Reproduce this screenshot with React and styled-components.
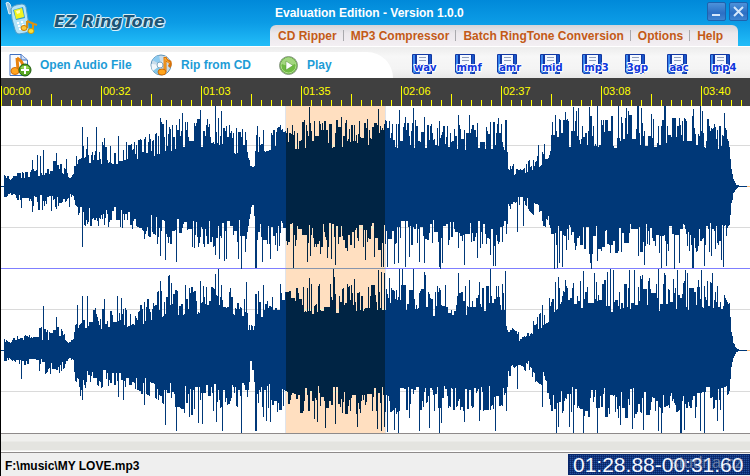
import React from "react";
import styled, { createGlobalStyle } from "styled-components";

const GlobalStyle = createGlobalStyle`
  * {
    box-sizing: border-box;
  }
  body {
    margin: 0;
    background-color: #efefef;
    font-family: "Liberation Sans", Arial, sans-serif;
    font-size: 12px;
  }
  button {
    margin: 0;
    padding: 0;
    border: 0;
    background: none;
    font: inherit;
    cursor: pointer;
  }
`;

const PlayerStyles = styled.div`
  border-left: 1px solid #000;
  overflow: hidden;
`;

const HeaderStyles = styled.header`
  display: flex;
  justify-content: space-between;
  height: 46px;
  background: linear-gradient(#0089d9, #0c9ce6 50%, #22bdf8);
`;

const Brand = styled.div`
  display: flex;
  align-items: flex-start;
  gap: 16px;
  padding: 1px 0 0 3px;
`;

const BrandName = styled.h1`
  margin: 0;
  padding-top: 11px;
  font-family: "DejaVu Sans", Verdana, sans-serif;
  font-size: 16px;
  line-height: 20px;
  font-style: italic;
  font-weight: bold;
  color: #1b5577;
  white-space: nowrap;
  text-shadow: 1px 0 #d8f0fa, -1px 0 #d8f0fa, 0 1px #d8f0fa, 0 -1px #d8f0fa,
    1px 1px #bfe6f8, -1px -1px #bfe6f8;
`;

const HeaderSide = styled.div`
  display: flex;
  flex-direction: column;
  width: 480px;
`;

const TitleBar = styled.div`
  display: flex;
  justify-content: space-between;
  height: 25px;
  padding: 2px 2px 0 5px;
`;

const WindowTitle = styled.div`
  font-weight: bold;
  line-height: 22px;
  color: #fff;
`;

const WindowButtons = styled.div`
  display: flex;
  gap: 3px;
`;

const WindowButton = styled.button`
  width: 19px;
  height: 19px;
  border: 1px solid #1f62ad;
  border-radius: 2px;
  background: linear-gradient(#4d92da, #2c6fc4 60%, #3f86d2);
  svg {
    display: block;
    width: 17px;
    height: 17px;
  }
`;

const Menu = styled.nav`
  display: flex;
  align-items: center;
  justify-content: space-between;
  height: 21px;
  margin-right: 12px;
  padding: 0 10px 0 0;
  border-radius: 6px 6px 0 0;
  background: linear-gradient(#d4d4d8, #ece8ec 40%, #f3eff3);
`;

const MenuButton = styled.button`
  padding: 0 6px 0 8px;
  font-weight: bold;
  line-height: 16px;
  color: #c35a17;
  white-space: nowrap;
  & + & {
    background: linear-gradient(#a9a9ad, #a9a9ad) 0 2px / 1px 11px no-repeat;
  }
`;

const ToolbarStyles = styled.div`
  display: flex;
  justify-content: space-between;
  height: 32px;
  padding-top: 5px;
  border-top: 1px solid #fff;
  background: linear-gradient(#ececec, #f7f7f7 30%, #f4f4f4 70%, #e8e8e8);
`;

const Actions = styled.div`
  display: grid;
  grid-template-columns: 142px 128px auto;
  width: 392px;
  padding-left: 7px;
  border-radius: 0 30px 0 0;
  background-color: #fff;
`;

const ActionButton = styled.button`
  display: flex;
  align-items: center;
  gap: 8px;
  font-weight: bold;
  color: #1d9cd6;
  white-space: nowrap;
  svg {
    flex-shrink: 0;
  }
`;

const Formats = styled.div`
  display: flex;
  justify-content: space-between;
  flex: 1;
  padding: 0 13px 0 18px;
`;

const FormatButton = styled.button`
  position: relative;
  width: 28px;
  height: 24px;
  svg {
    display: block;
  }
  span {
    position: absolute;
    left: 3px;
    top: 9px;
    font-family: "DejaVu Sans", Verdana, sans-serif;
    font-size: 10px;
    font-weight: bold;
    line-height: 14px;
    color: #0f35dc;
    text-shadow: 1px 0 #fff, -1px 0 #fff, 0 1px #fff, 0 -1px #fff, 1px 1px #fff,
      -1px -1px #fff;
  }
`;

const Ruler = styled.div`
  display: flex;
  height: 28px;
  padding-top: 8px;
  overflow: hidden;
  background-color: #404040;
`;

const RulerMark = styled.div`
  flex: 0 0 100px;
  border-left: 1px solid #ff0;
  padding-left: 1px;
  font-size: 11px;
  line-height: 10px;
  color: #ff0;
  background: linear-gradient(#ff0, #ff0) 48px 100% / 1px 12px no-repeat
      content-box,
    repeating-linear-gradient(
        to right,
        transparent 0 8px,
        #ff0 8px 9px,
        transparent 9px 10px
      )
      0 100% / 100% 6px no-repeat content-box;
`;

const WaveStyles = styled.svg`
  display: block;
  width: 100%;
  height: 327px;
  background-color: #fff;
`;

const ScrollTrack = styled.div`
  height: 20px;
  border-top: 1px solid #8e8a8a;
  border-bottom: 1px solid #8e8a8a;
  background: linear-gradient(#f0f0ee 0 7px, #e4e4e0 8px 16px, #fff 17px);
`;

const StatusBar = styled.footer`
  display: flex;
  align-items: center;
  justify-content: space-between;
  height: 23px;
  padding-left: 4px;
  background-color: #efefef;
`;

const FileName = styled.div`
  padding-top: 3px;
  font-weight: bold;
  color: #000;
`;

const Counter = styled.div`
  position: relative;
  width: 182px;
  height: 21px;
  padding-left: 4px;
  border: 1px solid #06256a;
  background: repeating-linear-gradient(
      to right,
      rgba(5, 30, 90, 0.6) 0 1px,
      transparent 1px 2px
    ),
    repeating-linear-gradient(#2450a0 0 1px, #0f3078 1px 2px);
  font-size: 21px;
  line-height: 19px;
  color: #f4f8ff;
  white-space: nowrap;
`;

const Watermark = styled.span`
  position: absolute;
  right: 6px;
  top: 0;
  font-size: 17px;
  line-height: 16px;
  color: rgba(190, 195, 205, 0.5);
`;

const PhoneIcon = () => (
  <svg width="34" height="34" viewBox="0 0 34 34">
    <path d="M2 2 Q4 0 6 3 L9 12 L5 13 Z" fill="#9fc4dc" stroke="#d9f1fb" />
    <path
      d="M7 8 Q8 5 12 4 L18 3 Q21 3 22 6 L24 18 L25 28 Q25 32 21 32 L15 33 Q12 33 11 29 L8 18 Z"
      fill="#b5e4f8"
      stroke="#4d9cc8"
    />
    <path d="M9 9 L19 6 L21 17 L12 19 Z" fill="#2b9bcf" />
    <path d="M10 9 L18 7 Q20 14 20 16 L12 18 Z" fill="#f3f31e" />
    <path d="M12 10 L16 9 L16 12 L13 13 Z" fill="#ffffb8" />
    <path
      d="M13 22 h2 M17 21 h2 M14 25 h2 M18 24 h2 M15 28 h2 M19 28 h2"
      stroke="#fff"
      strokeWidth="2"
    />
    <path
      d="M23 20 L30 23 M23 20 V27 M29 23 V30"
      stroke="#d99112"
      strokeWidth="2"
      fill="none"
    />
    <ellipse cx="20" cy="27" rx="3" ry="2.5" fill="#ffc736" stroke="#c47d0a" />
    <ellipse cx="27" cy="30" rx="3" ry="2.5" fill="#ffe03a" stroke="#c49a0a" />
    <path d="M30 23 L33 24" stroke="#d99112" strokeWidth="2" />
  </svg>
);

const OpenIcon = () => (
  <svg width="24" height="24" viewBox="0 0 24 24">
    <path d="M2 1.5 H13 L19.5 7 V22.5 H2 Z" fill="#f6faff" stroke="#3f6fbf" />
    <path d="M13 1.5 V7 H19" fill="#cfdff7" stroke="#3f6fbf" />
    <path d="M9 5 L10 17 M9 5 Q15 8 15 14" stroke="#e8820c" strokeWidth="3" fill="none" />
    <ellipse cx="7" cy="18" rx="4" ry="3.5" fill="#ffa41f" stroke="#d66f06" />
    <circle cx="17" cy="17" r="6" fill="#58a821" stroke="#1e5a12" />
    <path d="M12.5 15 A5 4 0 0 1 21.5 15 Q17 17 12.5 15" fill="#9ad65c" />
    <path d="M17 13 V21 M13 17 H21" stroke="#fff" strokeWidth="2" />
  </svg>
);

const CdIcon = () => (
  <svg width="23" height="24" viewBox="0 0 23 24">
    <circle cx="11" cy="12" r="10" fill="#c8dcea" stroke="#5d92b8" />
    <path d="M11 12 L2.5 7 A10 10 0 0 1 9 2.5 Z" fill="#8ecbf0" />
    <path d="M11 12 L3 18 A10 10 0 0 1 1.5 11 Z" fill="#f1f7fb" />
    <path d="M11 12 L8 21 A10 10 0 0 1 3 18 Z" fill="#83c6e6" />
    <path d="M11 12 L15 3 A10 10 0 0 1 20 8 Z" fill="#eef6fa" />
    <circle cx="10" cy="12" r="3" fill="#fff" stroke="#7ea6c0" />
    <path d="M15 19 V4 Q16 8 20 9 Q21 12 19 14" stroke="#d97207" strokeWidth="3" fill="none" />
    <path d="M15 18 V5 Q17 9 20 10" stroke="#ffb338" fill="none" />
    <ellipse cx="12" cy="19" rx="4" ry="3" fill="#ffa51d" stroke="#cc6a08" />
  </svg>
);

const PlayIcon = () => (
  <svg width="21" height="24" viewBox="0 0 21 24">
    <circle cx="10.5" cy="12.5" r="9" fill="#5fae35" stroke="#8f9c8a" />
    <circle cx="10.5" cy="12.5" r="7.5" fill="#6fba42" stroke="#b4df94" />
    <path d="M4 11 A6.5 6.5 0 0 1 17 11 Q10 14 4 11" fill="#a3d67f" />
    <path d="M8 8 L15 12.5 L8 17 Z" fill="#fff" stroke="#4d8f2c" strokeWidth="0.5" />
  </svg>
);

const DiskIcon = () => (
  <svg width="22" height="21" viewBox="0 0 22 21">
    <path d="M1 1 Q1 0 2 0 H20 Q21 0 21 1 V20 H3 L1 18 Z" fill="#1238a4" />
    <path d="M2 1 H4 V19 H3 L2 18 Z" fill="#3c86ee" />
    <path d="M18 1 H20 V19 H18 Z" fill="#1a55c8" />
    <rect x="6" y="1" width="11" height="9" fill="#f4f8ff" />
    <path d="M8 3.5 H15 M8 6.5 H15" stroke="#8f9dbd" />
    <rect x="4" y="11" width="14" height="9" fill="#2258c8" />
    <rect x="9" y="14" width="7" height="6" fill="#dfe8f7" />
  </svg>
);

const menuItems = [
  "CD Ripper",
  "MP3 Compressor",
  "Batch RingTone Conversion",
  "Options",
  "Help",
];
const formats = ["wav", "mmf", "amr", "mid", "mp3", "3gp", "aac", "mp4"];
const times = ["00:00", "00:32", "01:03", "01:35", "02:06", "02:37", "03:08", "03:40"];

const actions = [
  { label: "Open Audio File", Icon: OpenIcon },
  { label: "Rip from CD", Icon: CdIcon },
  { label: "Play", Icon: PlayIcon },
];

// [x, quietest level, loudest level]
const envelope = [
  [3, 8, 13], [9, 6, 9], [14, 8, 14], [29, 8, 16], [33, 8, 26], [48, 8, 26],
  [60, 8, 24], [68, 6, 10], [72, 9, 14], [74, 18, 34], [80, 20, 42],
  [105, 20, 42], [135, 24, 46], [150, 28, 54], [165, 32, 66], [180, 34, 68],
  [200, 36, 68], [225, 34, 60], [245, 30, 58], [249, 10, 30], [252, 12, 26],
  [254, 28, 60], [270, 34, 62], [300, 36, 66], [340, 36, 66], [380, 38, 68],
  [400, 36, 66], [440, 34, 64], [500, 36, 66], [505, 24, 50], [507, 16, 28],
  [515, 9, 22], [521, 8, 19], [530, 12, 30], [547, 26, 46], [550, 36, 66],
  [580, 38, 70], [640, 38, 72], [700, 38, 72], [722, 36, 64], [728, 34, 48],
  [730, 13, 20], [732, 6, 8], [735, 1, 2], [738, 0, 0], [749, 0, 0],
];

const peaks = {
  leftUp: [
    31, 26, 36, 31, 39, 30, 42, 36, 55, 33, 65, 27, 81, 59, 86, 49, 95, 59, 101, 44,
    103, 48, 117, 50, 143, 47, 148, 52, 159, 68, 160, 64, 162, 62, 169, 57, 181, 73,
    184, 64, 193, 63, 199, 76, 206, 67, 214, 81, 217, 68, 220, 75, 225, 60, 228, 61,
    235, 58, 255, 51, 262, 56, 276, 58, 279, 61, 286, 58, 306, 55, 308, 79, 313, 65,
    318, 65, 330, 62, 340, 69, 353, 61, 358, 65, 366, 67, 377, 77, 379, 60, 383, 62,
    388, 65, 398, 76, 404, 69, 412, 78, 414, 66, 423, 69, 438, 65, 457, 71, 468, 71,
    476, 63, 489, 64, 497, 68, 500, 62, 504, 66, 505, 66, 537, 41, 554, 71, 559, 66,
    564, 74, 572, 79, 575, 75, 577, 78, 588, 79, 596, 81, 601, 61, 617, 80, 625, 78,
    627, 75, 636, 80, 637, 80, 640, 78, 650, 72, 657, 60, 663, 81, 664, 80, 676, 60,
    681, 65, 683, 68, 692, 77, 699, 80, 701, 75, 713, 62, 723, 73,
  ],
  leftDown: [
    20, 21, 31, 25, 55, 22, 68, 20, 81, 60, 97, 39, 107, 40, 119, 40, 143, 52, 151, 45,
    156, 57, 159, 69, 164, 73, 170, 57, 175, 75, 191, 60, 197, 60, 203, 60, 214, 68,
    218, 72, 223, 74, 225, 72, 237, 72, 240, 82, 244, 65, 254, 81, 255, 81, 261, 75,
    269, 72, 276, 64, 292, 81, 306, 75, 309, 69, 319, 67, 326, 71, 330, 72, 334, 78,
    346, 64, 364, 73, 373, 70, 380, 80, 382, 80, 386, 80, 393, 77, 397, 76, 404, 80,
    408, 70, 418, 75, 423, 76, 438, 80, 439, 82, 441, 76, 457, 61, 463, 78, 476, 71,
    489, 68, 492, 79, 494, 79, 501, 55, 516, 45, 522, 39, 553, 82, 556, 81, 558, 76,
    561, 80, 589, 76, 590, 82, 596, 74, 609, 66, 617, 64, 637, 69, 643, 78, 660, 81,
    665, 79, 673, 82, 678, 76, 691, 81, 692, 81, 703, 79, 710, 69, 720, 73, 722, 80,
  ],
  rightUp: [
    42, 44, 55, 33, 76, 45, 81, 54, 86, 54, 103, 51, 116, 54, 120, 52, 143, 48, 159, 69,
    167, 74, 168, 75, 175, 60, 184, 65, 199, 69, 205, 63, 214, 76, 217, 81, 220, 65,
    229, 62, 245, 68, 262, 65, 279, 66, 306, 62, 308, 72, 318, 66, 329, 66, 332, 81,
    333, 73, 353, 71, 377, 80, 380, 78, 383, 77, 388, 72, 398, 81, 401, 81, 412, 81,
    423, 78, 424, 75, 444, 65, 457, 77, 468, 70, 478, 68, 489, 81, 497, 64, 501, 66,
    504, 79, 541, 45, 554, 68, 557, 73, 564, 70, 572, 67, 582, 79, 593, 77, 606, 78,
    609, 81, 612, 80, 628, 80, 633, 80, 639, 74, 641, 75, 657, 81, 663, 77, 664, 75,
    676, 80, 684, 80, 686, 77, 697, 70, 700, 80, 711, 77, 723, 55,
  ],
  rightDown: [
    20, 28, 79, 45, 81, 49, 117, 46, 122, 49, 143, 54, 164, 74, 175, 80, 188, 66,
    197, 72, 201, 73, 215, 71, 221, 80, 240, 82, 254, 80, 255, 80, 262, 66, 265, 70,
    269, 71, 276, 61, 313, 68, 316, 71, 324, 77, 334, 73, 356, 76, 376, 78, 380, 80,
    383, 76, 386, 81, 393, 79, 397, 82, 408, 67, 418, 80, 428, 77, 438, 82, 440, 72,
    463, 71, 478, 70, 494, 80, 505, 60, 516, 38, 541, 56, 555, 82, 557, 76, 568, 76,
    572, 82, 582, 82, 596, 82, 619, 74, 631, 78, 642, 79, 657, 80, 660, 82, 679, 82,
    680, 82, 683, 79, 699, 80, 703, 82, 716, 70, 722, 80,
  ],
};

const levelAt = (x) => {
  const next = envelope.findIndex((point) => point[0] > x);
  const a = envelope[next - 1];
  const b = envelope[next];
  const t = (x - a[0]) / (b[0] - a[0]);
  return [a[1] + (b[1] - a[1]) * t, a[2] + (b[2] - a[2]) * t];
};

const buildSide = (seed, list, scale) => {
  const heights = {};
  let state = seed;
  let last = 0.5;
  const random = () => {
    state = (state * 1664525 + 1013904223) % 4294967296;
    return state / 4294967296;
  };
  for (let x = 3; x < 739; x++) {
    const [low, high] = levelAt(x);
    // some columns repeat the one before, which makes wider spikes
    const r = random() < 0.35 ? last : random();
    last = r;
    heights[x] = Math.round((low + (high - low) * r) * scale);
  }
  for (let i = 0; i < list.length; i += 2) {
    heights[list[i]] = list[i + 1];
  }
  return heights;
};

const buildChannel = (center, up, down) => {
  let d = "";
  for (let x = 3; x < 739; x++) {
    d += `M${x} ${center - up[x]}h1V${center + 1 + down[x]}h-1z`;
  }
  return d;
};

const leftPath = buildChannel(
  80,
  buildSide(11, peaks.leftUp, 1),
  buildSide(29, peaks.leftDown, 0.95)
);
const rightPath = buildChannel(
  244,
  buildSide(47, peaks.rightUp, 1),
  buildSide(83, peaks.rightDown, 0.95)
);

const Waveform = () => (
  <WaveStyles
    viewBox="0 0 749 327"
    preserveAspectRatio="none"
    shapeRendering="crispEdges"
    role="img"
    aria-label="Waveform"
  >
    <defs>
      <clipPath id="selection">
        <rect x="285" y="0" width="99" height="327" />
      </clipPath>
    </defs>
    {[39, 121, 203, 285].map((y) => (
      <rect key={y} x="0" y={y} width="749" height="1" fill="#dadada" />
    ))}
    <rect x="284" y="0" width="101" height="327" fill="#dfe4ec" />
    <rect x="285" y="0" width="99" height="327" fill="#ffdfc0" />
    {[39, 121, 203, 285].map((y) => (
      <rect key={y} x="285" y={y} width="99" height="1" fill="#e2f4cc" />
    ))}
    <rect x="0" y="162" width="749" height="1" fill="#7f7fff" />
    <rect x="285" y="162" width="99" height="1" fill="#8795ad" />
    {[80, 244].map((y) => (
      <g key={y}>
        <rect x="0" y={y} width="746" height="1" fill="#003878" />
        <rect x="746" y={y} width="3" height="1" fill="#ffc080" />
      </g>
    ))}
    <path d={leftPath + rightPath} fill="#003878" />
    <path d={leftPath + rightPath} fill="#002444" clipPath="url(#selection)" />
  </WaveStyles>
);

const App = () => {
  return (
    <>
      <GlobalStyle />
      <PlayerStyles>
        <HeaderStyles>
          <Brand>
            <PhoneIcon />
            <BrandName>EZ RingTone</BrandName>
          </Brand>
          <HeaderSide>
            <TitleBar>
              <WindowTitle>Evaluation Edition - Version 1.0.0</WindowTitle>
              <WindowButtons>
                <WindowButton aria-label="Minimize">
                  <svg viewBox="0 0 17 17">
                    <path d="M4 12 H12" stroke="#d5e8fb" strokeWidth="2" />
                  </svg>
                </WindowButton>
                <WindowButton aria-label="Close">
                  <svg viewBox="0 0 17 17">
                    <path d="M4 4 L13 13 M13 4 L4 13" stroke="#d5e8fb" strokeWidth="2" />
                  </svg>
                </WindowButton>
              </WindowButtons>
            </TitleBar>
            <Menu>
              {menuItems.map((item) => (
                <MenuButton key={item}>{item}</MenuButton>
              ))}
            </Menu>
          </HeaderSide>
        </HeaderStyles>
        <ToolbarStyles>
          <Actions>
            {actions.map(({ label, Icon }) => (
              <ActionButton key={label}>
                <Icon />
                {label}
              </ActionButton>
            ))}
          </Actions>
          <Formats>
            {formats.map((format) => (
              <FormatButton key={format}>
                <DiskIcon />
                <span>{format}</span>
              </FormatButton>
            ))}
          </Formats>
        </ToolbarStyles>
        <Ruler>
          {times.map((time) => (
            <RulerMark key={time}>{time}</RulerMark>
          ))}
        </Ruler>
        <Waveform />
        <ScrollTrack />
        <StatusBar>
          <FileName>F:\music\MY LOVE.mp3</FileName>
          <Counter>
            01:28.88-00:31.60
            <Watermark>studna.cz</Watermark>
          </Counter>
        </StatusBar>
      </PlayerStyles>
    </>
  );
};

export default App;
